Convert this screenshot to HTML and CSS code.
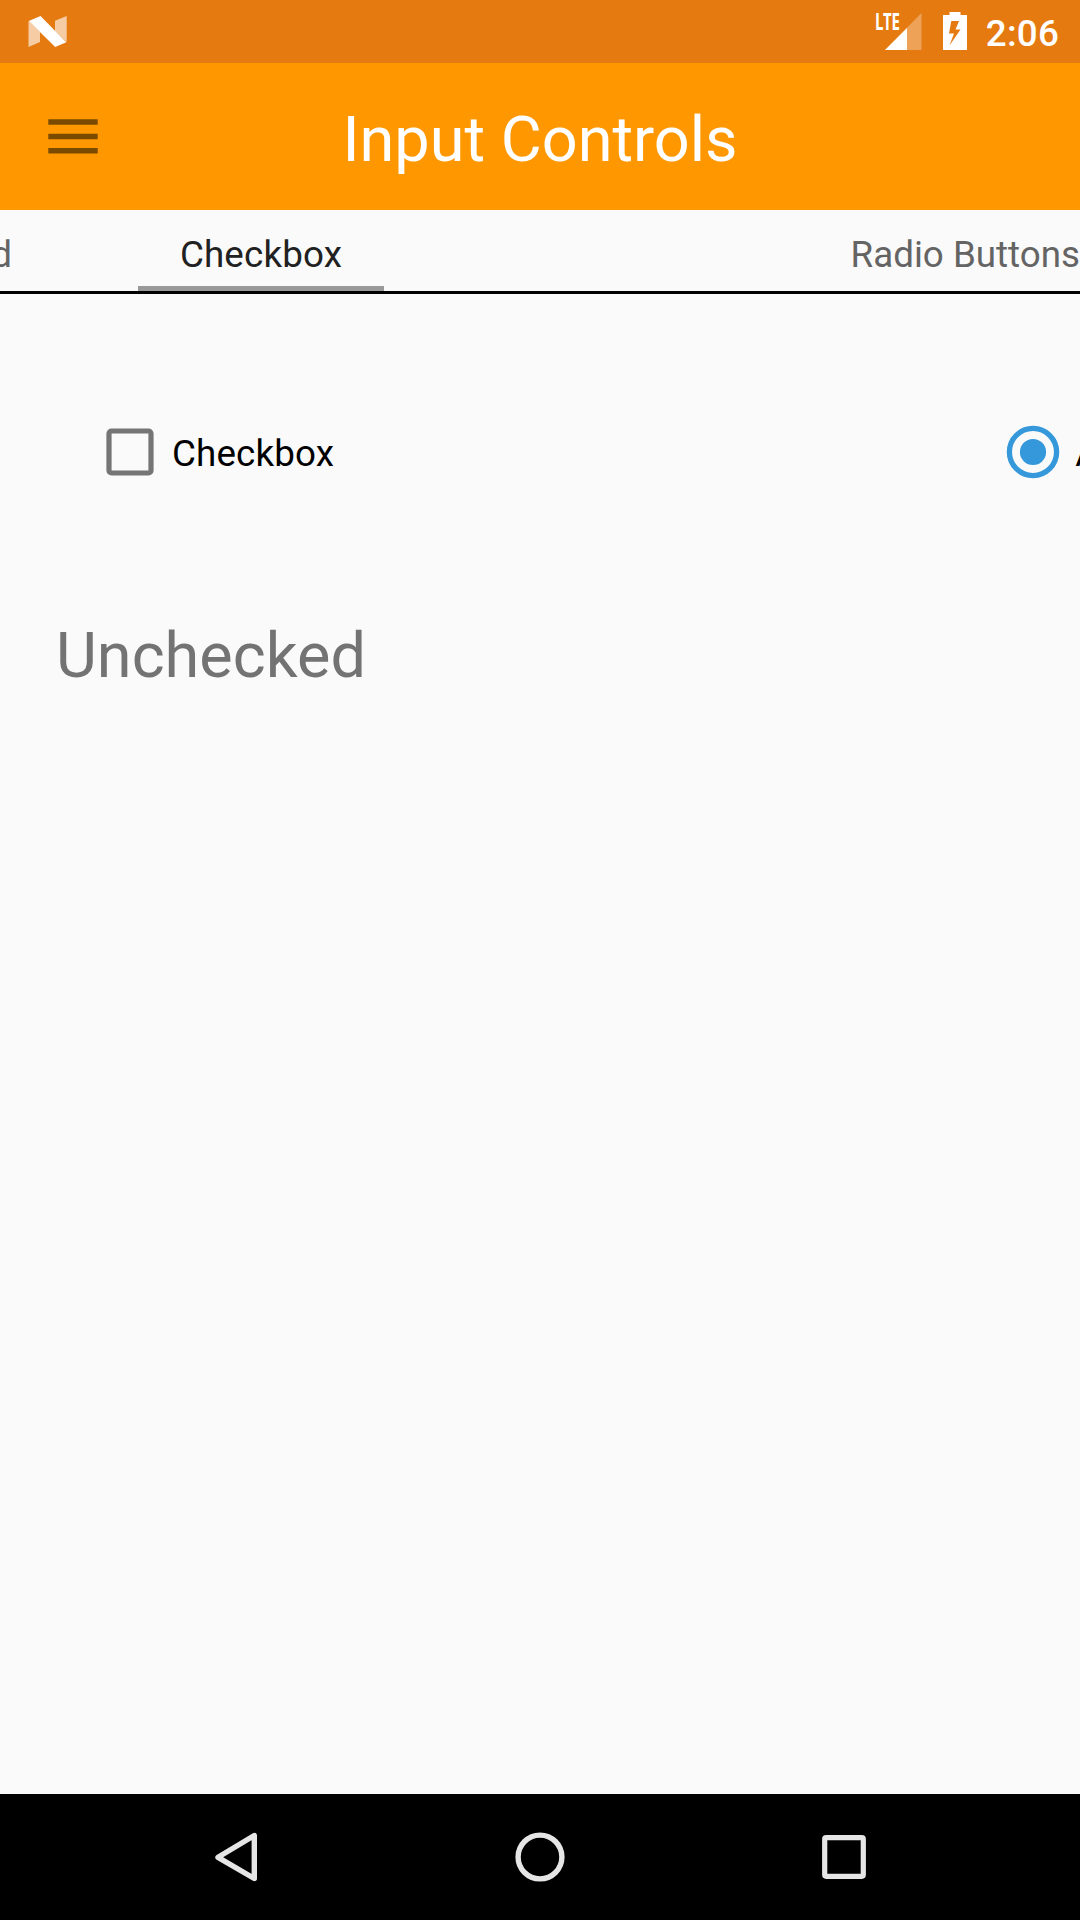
FILE: index.html
```html
<!DOCTYPE html>
<html lang="en">
<head>
<meta charset="utf-8">
<title>Input Controls</title>
<link rel="stylesheet" href="styles.css">
</head>
<body>
<div class="screen">
  <div class="status-bar">
    <svg class="n-logo" width="40" height="32" viewBox="0 0 40 32">
      <path d="M.5 4.8 12 16v10L.5 31zM27 4.8 38.7 0v26L27 15z" fill="#fff" opacity=".62"/>
      <path d="M.8 5 12.5 0 38.3 26.3 27.2 31z" fill="#fff"/>
    </svg>
    <div class="status-icons">
      <div class="signal">
        <svg width="37" height="37" viewBox="0 0 37 37">
          <path d="M0 37 36.5 0v37z" fill="#fff" opacity=".3"/>
          <path d="M0 37 22 15v22z" fill="#fff"/>
        </svg>
        <span class="lte">LTE</span>
      </div>
      <svg class="battery" width="25" height="38" viewBox="0 0 25 38">
        <path fill="#fff" fill-rule="evenodd" d="M6.5 0h11v3H24v35H0V3h6.500zM8.300 9 6 21.500h5L6.500 33.500 17.500 17.500h-5L16 9z"/>
      </svg>
      <span class="clock">2:06</span>
    </div>
  </div>
  <header class="app-bar">
    <svg class="menu" width="50" height="35" viewBox="0 0 50 35">
      <path d="M.3 .3h49.400v5.400H.3zM.3 14.800h49.400v5.400H.3zM.3 29.100h49.400v5.400H.3z" fill="#7a4a00"/>
    </svg>
    <h1 class="title">Input Controls</h1>
  </header>
  <nav class="tabs">
    <span class="tab tab-prev">Keyboard</span>
    <span class="tab tab-active">Checkbox</span>
    <span class="tab tab-next">Radio Buttons</span>
  </nav>
  <main class="content">
    <div class="controls">
      <label class="control">
        <svg width="48" height="48" viewBox="0 0 48 48">
          <rect x="3" y="3" width="42" height="42" rx="2.5" fill="none" stroke="#757575" stroke-width="5.2"/>
        </svg>
        <span class="label">Checkbox</span>
      </label>
      <label class="control option">
        <svg width="54" height="54" viewBox="0 0 54 54">
          <circle cx="27" cy="27" r="23.6" fill="none" stroke="#3498db" stroke-width="5.3"/>
          <circle cx="27" cy="27" r="13.1" fill="#3498db"/>
        </svg>
        <span class="label">A</span>
      </label>
    </div>
    <p class="state">Unchecked</p>
  </main>
  <div class="nav-bar">
    <svg width="50" height="56" viewBox="0 0 50 56">
      <path d="M7 28.3 43.300 6.500v43z" fill="none" stroke="#e6e6e6" stroke-width="5.400" stroke-linejoin="round"/>
    </svg>
    <svg width="50" height="56" viewBox="0 0 50 56">
      <circle cx="25" cy="28" r="21.9" fill="none" stroke="#e6e6e6" stroke-width="5.4"/>
    </svg>
    <svg width="50" height="56" viewBox="0 0 50 56">
      <rect x="5.7" y="8.7" width="38.6" height="38.6" rx="1.5" fill="none" stroke="#e6e6e6" stroke-width="5.2"/>
    </svg>
  </div>
</div>
</body>
</html>
```
FILE: styles.css
```css
* { box-sizing: border-box; }
body {
  margin: 0;
  font-family: Roboto, "Liberation Sans", sans-serif;
  background: #fafafa;
}
svg { display: block; flex: none; }
.screen {
  width: 1080px;
  height: 1920px;
  display: flex;
  flex-direction: column;
  overflow: hidden;
}
.status-bar {
  height: 63px;
  padding: 0 21px 0 28px;
  display: flex;
  justify-content: space-between;
  background: #e57a11;
  color: #fff;
}
.n-logo { margin-top: 16px; }
.status-icons { display: flex; }
.signal { position: relative; margin: 12.5px 21px 0 0; }
.lte {
  position: absolute;
  left: -9.5px;
  top: 0;
  font: 700 23px/17px "Open Sans", sans-serif;
  letter-spacing: -0.5px;
  transform: scaleX(.65);
  transform-origin: left;
}
.battery { margin: 12px 18px 0 0; }
.clock {
  font-size: 36.75px;
  font-weight: 500;
  line-height: 68px;
  letter-spacing: 0.2px;
}
.app-bar {
  height: 147px;
  padding: 0 48px;
  display: grid;
  grid-template-columns: 50px 1fr 50px;
  align-items: center;
  background: #ff9800;
}
.menu { margin-top: -1px; }
.title {
  margin: 6px 0 0;
  font-size: 63px;
  font-weight: 400;
  text-align: center;
  color: #fff;
}
.tabs {
  height: 84px;
  display: flex;
  border-bottom: 3px solid #000;
  font-size: 36.75px;
  line-height: 89px;
  color: #646464;
}
.tab { white-space: nowrap; }
.tab-prev {
  width: 12px;
  margin-right: 126px;
  display: flex;
  justify-content: flex-end;
}
.tab-active {
  width: 246px;
  border-bottom: 5px solid #999;
  text-align: center;
  letter-spacing: 0.15px;
  color: #212121;
}
.tab-next { margin-left: auto; }
.content {
  flex: 1;
  padding: 117px 0 0 56px;
}
.controls {
  height: 82px;
  padding-left: 50px;
  display: flex;
  align-items: center;
}
.control { display: flex; align-items: center; gap: 18px; }
.control.option {
  gap: 15px;
  margin-left: 672px;
}
.label {
  margin-top: 3px;
  font-size: 36.75px;
  letter-spacing: 0.15px;
  color: #000;
}
.state {
  margin: 126px 0 0;
  font-size: 63px;
  line-height: 74px;
  color: #737373;
}
.nav-bar {
  height: 126px;
  padding: 0 211px;
  display: flex;
  align-items: center;
  justify-content: space-between;
  background: #000;
}
```
